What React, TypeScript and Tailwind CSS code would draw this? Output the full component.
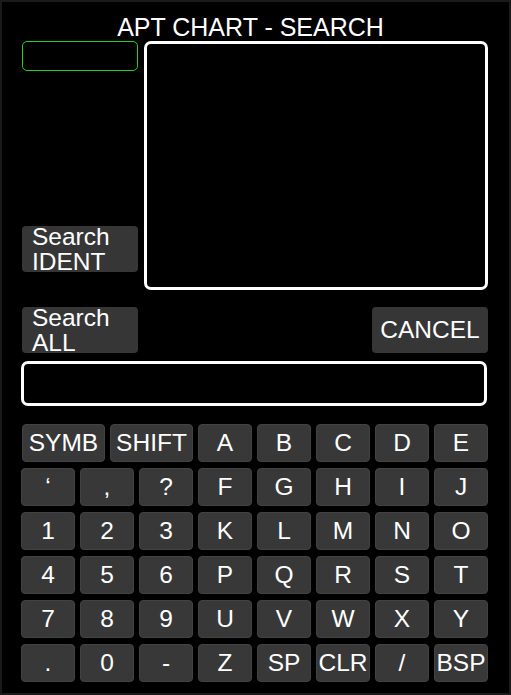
import React from 'react';

const font = { fontFamily: '"Liberation Sans", Arial, sans-serif' };

const rows: string[][] = [
    ['‘', ',', '?', 'F', 'G', 'H', 'I', 'J'],
    ['1', '2', '3', 'K', 'L', 'M', 'N', 'O'],
    ['4', '5', '6', 'P', 'Q', 'R', 'S', 'T'],
    ['7', '8', '9', 'U', 'V', 'W', 'X', 'Y'],
    ['.', '0', '-', 'Z', 'SP', 'CLR', '/', 'BSP'],
];

function Key({ label, wide }: { label: string; wide?: boolean }) {
    return (
        <div
            className={`${wide ? 'flex-1' : 'w-[54px]'} h-[38px] rounded-[4px] bg-[#383838] border border-[#424242] flex items-center justify-center text-white text-[24.5px] leading-none`}
        >
            {label}
        </div>
    );
}

export default function App() {
    return (
        <div
            className="w-[511px] h-[695px] bg-black border-2 border-[#1a1a1a] box-border flex flex-col px-[19px]"
            style={font}
        >
            {/* Title */}
            <div className="pt-[12px] pr-[10px] text-center text-white text-[25px] leading-[27px]">APT CHART - SEARCH</div>

            {/* Ident field + result list */}
            <div className="flex">
                <div className="w-[116px] ml-[1px] flex flex-col">
                    <div className="h-[30px] rounded-[5px] border border-[#1fd21f]" />
                    <div className="mt-[155px] h-[46px] rounded-[4px] bg-[#363636] text-white text-[24.5px] leading-[25px] pl-[10px]">
                        <div className="-mt-[2px]">
                            Search
                            <br />
                            IDENT
                        </div>
                    </div>
                </div>
                <div className="ml-[6px] w-[344px] h-[249px] rounded-[7px] border-[3px] border-white" />
            </div>

            {/* Search ALL / CANCEL */}
            <div className="mt-[17px] flex justify-between pl-[1px] pr-[2px]">
                <div className="w-[116px] h-[46px] rounded-[4px] bg-[#363636] text-white text-[24.5px] leading-[25px] pl-[10px]">
                    <div className="-mt-[2px]">
                        Search
                        <br />
                        ALL
                    </div>
                </div>
                <div className="w-[116px] h-[46px] rounded-[4px] bg-[#363636] text-white text-[24.5px] flex items-center justify-center">
                    CANCEL
                </div>
            </div>

            {/* Entry line */}
            <div className="mt-[8px] w-[466px] h-[45px] rounded-[7px] border-[3px] border-white" />

            {/* Keyboard */}
            <div className="mt-[18px] w-[467px] flex flex-col gap-[6px]">
                <div className="flex gap-[5px]">
                    <div className="w-[172px] flex gap-[5px] pl-[1px]">
                        <Key label="SYMB" wide />
                        <Key label="SHIFT" wide />
                    </div>
                    {['A', 'B', 'C', 'D', 'E'].map((k) => (
                        <Key key={k} label={k} />
                    ))}
                </div>
                {rows.map((row, i) => (
                    <div key={i} className="flex gap-[5px]">
                        {row.map((k) => (
                            <Key key={k} label={k} />
                        ))}
                    </div>
                ))}
            </div>
        </div>
    );
}
